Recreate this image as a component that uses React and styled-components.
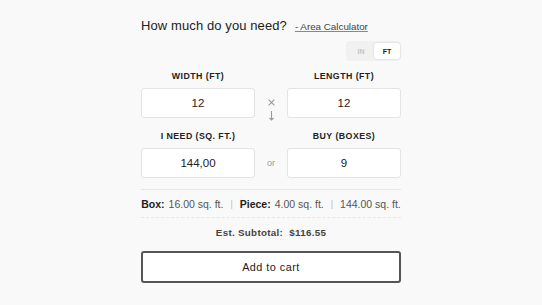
import React, { useState } from "react";
import styled, { createGlobalStyle } from "styled-components";

const Global = createGlobalStyle`
  html, body { margin: 0; padding: 0; background: #f9f9f9; }
  body { font-family: "Liberation Sans", Arial, sans-serif; color: #222; }
`;

const Wrap = styled.div`
  width: 260px;
  margin: 0 auto;
  padding-top: 18px;
  display: flex;
  flex-direction: column;
`;

const TitleRow = styled.div`
  display: flex;
  align-items: baseline;
  gap: 8px;
`;

const Title = styled.h2`
  margin: 0;
  font-size: 13px;
  font-weight: 400;
  letter-spacing: 0.1px;
  color: #222;
`;

const CalcLink = styled.a`
  font-size: 9.8px;
  color: #444;
  text-decoration: underline;
  text-decoration-color: #888;
`;

const ToggleRow = styled.div`
  display: flex;
  justify-content: flex-end;
  margin-top: 8px;
`;

const Toggle = styled.div`
  display: flex;
  background: #f1f1f1;
  border-radius: 4px;
  padding: 2px 1px 2px 2px;
`;

const Seg = styled.button`
  border: none;
  width: 26px;
  height: 16px;
  font-family: inherit;
  font-size: 7px;
  font-weight: 700;
  padding: 0;
  border-radius: 3px;
  background: ${(p) => (p.$active ? "#fff" : "transparent")};
  color: ${(p) => (p.$active ? "#222" : "#c4c4c4")};
  box-shadow: ${(p) => (p.$active ? "0 0 2px rgba(0,0,0,0.15)" : "none")};
`;

const Grid = styled.div`
  display: grid;
  grid-template-columns: 114px 32px 114px;
  margin-top: 9px;
`;

const Label = styled.div`
  font-size: 8.8px;
  font-weight: 700;
  letter-spacing: 0.45px;
  color: #222;
  text-align: center;
  height: 18px;
  line-height: 12px;
  margin-top: ${(p) => (p.$second ? "12px" : "0")};
`;

const Input = styled.input`
  box-sizing: border-box;
  width: 114px;
  height: 30px;
  border: 1px solid #e4e4e4;
  border-radius: 3px;
  background: #fff;
  text-align: center;
  font-family: inherit;
  font-size: 11.5px;
  color: #222;
  outline: none;
`;

const Mid = styled.div`
  display: flex;
  align-items: center;
  justify-content: center;
  color: #999;
  font-size: 9px;
  svg { overflow: visible; }
`;

const Divider = styled.div`
  border-top: 1px ${(p) => (p.$dashed ? "dashed" : "solid")} #e6e6e6;
`;

const InfoRow = styled.div`
  display: flex;
  justify-content: center;
  align-items: center;
  font-size: 10.5px;
  color: #555;
  padding: 8px 0 7px;
  white-space: nowrap;
  b { color: #222; font-weight: 700; margin-right: 4px; }
`;

const Sep = styled.span`
  color: #bbb;
  margin: 0 7px;
  font-size: 9px;
`;

const Subtotal = styled.div`
  text-align: center;
  font-size: 9.8px;
  font-weight: 700;
  color: #444;
  padding: 9px 0 8px;
  letter-spacing: 0.3px;
`;

const CartButton = styled.button`
  margin-top: 5px;
  height: 32px;
  box-sizing: border-box;
  border: 2px solid #555;
  border-radius: 3px;
  background: #fff;
  font-family: inherit;
  font-size: 10.8px;
  color: #222;
  letter-spacing: 0.5px;
`;

export default function App() {
  const [unit, setUnit] = useState("FT");
  return (
    <>
      <Global />
      <Wrap>
        <TitleRow>
          <Title>How much do you need?</Title>
          <CalcLink href="#">- Area Calculator</CalcLink>
        </TitleRow>
        <ToggleRow>
          <Toggle>
            <Seg $active={unit === "IN"} onClick={() => setUnit("IN")}>IN</Seg>
            <Seg $active={unit === "FT"} onClick={() => setUnit("FT")}>FT</Seg>
          </Toggle>
        </ToggleRow>
        <Grid>
          <Label>WIDTH (FT)</Label>
          <div />
          <Label>LENGTH (FT)</Label>
          <Input defaultValue="12" />
          <Mid>
            <svg width="9" height="30" viewBox="0 0 9 30" fill="none" stroke="#999" strokeWidth="1.1">
              <path d="M1.6 11.6l5.8 5.8M7.4 11.6l-5.8 5.8" />
              <path d="M4.5 23v9M2.5 30l2 2 2-2" />
            </svg>
          </Mid>
          <Input defaultValue="12" />
          <Label $second>I NEED (SQ. FT.)</Label>
          <div />
          <Label $second>BUY (BOXES)</Label>
          <Input defaultValue="144,00" />
          <Mid>or</Mid>
          <Input defaultValue="9" />
        </Grid>
        <div style={{ height: 11 }} />
        <Divider />
        <InfoRow>
          <b>Box:</b>16.00 sq. ft.<Sep>|</Sep><b>Piece:</b>4.00 sq. ft.<Sep>|</Sep>144.00 sq. ft.
        </InfoRow>
        <Divider $dashed />
        <Subtotal>Est. Subtotal:&nbsp; $116.55</Subtotal>
        <CartButton>Add to cart</CartButton>
      </Wrap>
    </>
  );
}
